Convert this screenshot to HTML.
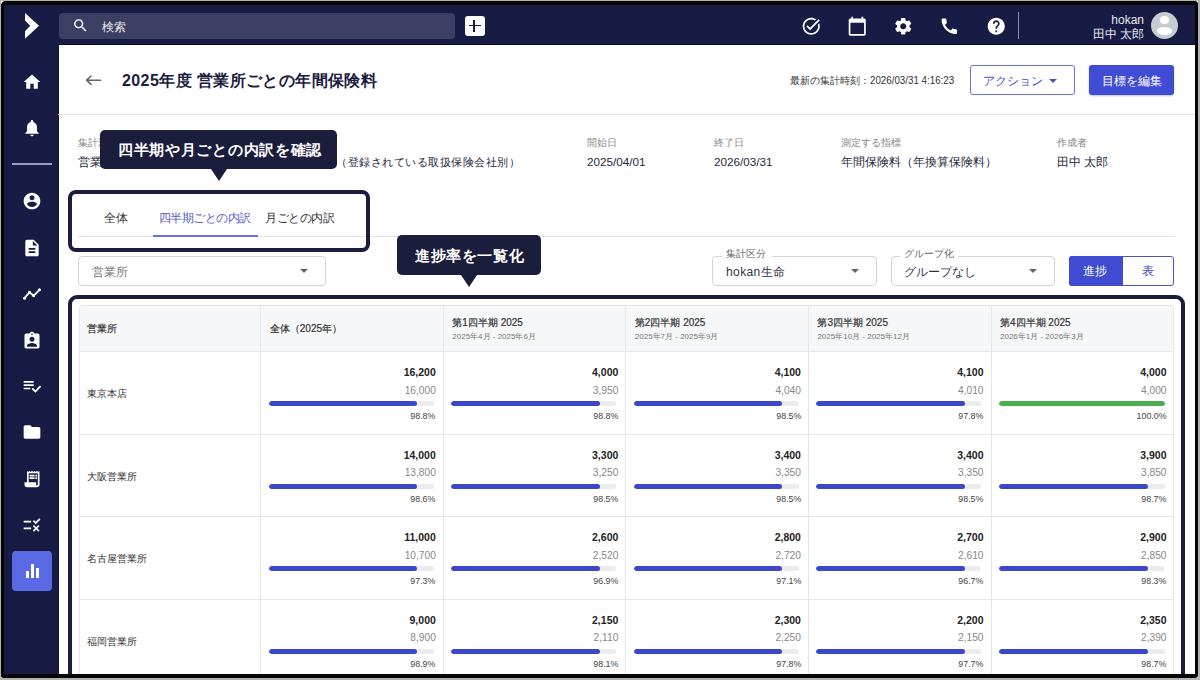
<!DOCTYPE html>
<html><head><meta charset="utf-8">
<style>
*{box-sizing:border-box;margin:0;padding:0}
html,body{width:1200px;height:680px;overflow:hidden;background:#fff}
body{font-family:"Liberation Sans",sans-serif;position:relative;color:#1b1d3f}
.a{position:absolute}
svg{display:block}
.ico{position:absolute;fill:#fff}
.t{position:absolute;white-space:nowrap;line-height:1}
#frame{position:absolute;left:0;top:0;width:1200px;height:680px;border-style:solid;border-color:rgba(0,0,0,.3);border-width:1px 2px 2px 1px;pointer-events:none}
#frame2{position:absolute;left:1px;top:1px;width:1196.5px;height:677px;border-style:solid;border-color:#060606;border-width:4px 3px 4px 3.5px;border-radius:5px 4px 3px 3px;box-shadow:0 0 0 12px #fff;pointer-events:none}
.nav{background:#181b44}
.n{display:inline-block;transform:scaleX(.93);transform-origin:0 0}
.hd{font-size:10px;color:#333;-webkit-text-stroke:0.2px #333}
.sb{font-size:8px;color:#777}
.nm{font-size:10px;color:#333}
.bn{font-size:10.5px;font-weight:bold;color:#222}
.gn{font-size:10.2px;color:#888}
.pc{font-size:9.3px;color:#444;transform:scaleX(.95);transform-origin:100% 0}
.trk{height:5px;background:#ececec;border-radius:3px;overflow:hidden}
.fil{height:5px;border-radius:3px}
</style></head><body>
<!-- top bar & sidebar -->
<div class="a nav" style="left:0;top:0;width:1200px;height:45px"></div>
<div class="a nav" style="left:0;top:0;width:58px;height:680px"></div>
<div class="a" style="left:58px;top:44px;width:1142px;height:1px;background:#080a2c"></div>
<div class="a" style="left:58px;top:45px;width:1px;height:635px;background:#0c0f33"></div>

<!-- logo chevron -->
<svg class="ico" style="left:25px;top:13px" width="15" height="26" viewBox="0 0 15 26"><path d="M0 0 L14 12.8 L0 25.8 L0 18.3 L5.2 12.8 L0 7.5 Z"/></svg>

<!-- search -->
<div class="a" style="left:59px;top:13px;width:396px;height:26px;background:#3c3f62;border-radius:4px"></div>
<svg class="ico" style="left:71.7px;top:17.3px" width="17" height="17" viewBox="0 0 24 24"><path d="M15.5 14h-.79l-.28-.27C15.410 12.59 16 11.11 16 9.5 16 5.91 13.09 3 9.5 3S3 5.91 3 9.5 5.91 16 9.5 16c1.61 0 3.090-.59 4.23-1.57l.27.28v.79l5 4.99L20.49 19l-4.99-5zm-6 0C7.01 14 5 11.99 5 9.5S7.01 5 9.5 5 14 7.01 14 9.5 11.99 14 9.5 14z"/></svg>
<div class="t" style="left:102px;top:21px;font-size:12px;color:#e4e4ec">検索</div>
<!-- plus -->
<div class="a" style="left:464.7px;top:15.5px;width:20px;height:20px;background:#fff;border-radius:3px"></div>
<div class="a nav" style="left:468.5px;top:24.6px;width:12px;height:1.8px"></div>
<div class="a nav" style="left:473.4px;top:19.7px;width:1.8px;height:12px"></div>

<!-- right icons -->
<svg class="ico" style="left:801px;top:15.7px" width="20.5" height="20.5" viewBox="0 0 24 24"><path d="M22 5.18L10.59 16.6l-4.24-4.24 1.41-1.41 2.83 2.83 10-10L22 5.18zm-2.21 5.04c.13.57.21 1.170.21 1.78 0 4.42-3.58 8-8 8s-8-3.58-8-8 3.58-8 8-8c1.58 0 3.04.46 4.28 1.25l1.44-1.44C16.1 2.67 14.13 2 12 2 6.48 2 2 6.48 2 12s4.48 10 10 10 10-4.48 10-10c0-1.19-.22-2.33-.6-3.39l-1.61 1.61z"/></svg>
<svg class="ico" style="left:847px;top:15.8px" width="20.5" height="20.5" viewBox="0 0 24 24"><path d="M20 3h-1V1h-2v2H7V1H5v2H4c-1.1 0-2 .9-2 2v16c0 1.1.9 2 2 2h16c1.1 0 2-.9 2-2V5c0-1.1-.9-2-2-2zm0 18H4V8h16v13z"/></svg>
<svg class="ico" style="left:892.7px;top:15.6px" width="20.5" height="20.5" viewBox="0 0 24 24"><path d="M19.14 12.94c.04-.3.06-.61.06-.94 0-.32-.02-.64-.07-.94l2.03-1.58c.18-.14.23-.41.12-.61l-1.92-3.32c-.12-.22-.37-.29-.59-.22l-2.39.96c-.5-.38-1.03-.7-1.62-.94l-.36-2.54c-.04-.24-.24-.41-.48-.41h-3.84c-.24 0-.43.17-.47.41l-.36 2.54c-.59.24-1.13.57-1.62.94l-2.39-.96c-.22-.08-.47 0-.59.22L2.740 8.87c-.12.21-.08.47.12.61l2.03 1.58c-.05.3-.09.63-.09.94s.02.64.07.94l-2.03 1.58c-.18.14-.23.41-.12.61l1.92 3.32c.12.22.37.29.59.22l2.39-.96c.5.38 1.03.7 1.62.94l.36 2.54c.05.24.24.41.48.41h3.84c.24 0 .44-.17.47-.41l.36-2.54c.59-.24 1.13-.56 1.62-.94l2.39.96c.22.08.47 0 .59-.22l1.92-3.32c.12-.22.07-.47-.12-.61l-2.01-1.58zM12 15.6c-1.98 0-3.6-1.62-3.6-3.6s1.62-3.6 3.6-3.6 3.6 1.62 3.6 3.6-1.62 3.6-3.6 3.6z"/></svg>
<svg class="ico" style="left:939px;top:16px" width="20.5" height="20.5" viewBox="0 0 24 24"><path d="M20.01 15.38c-1.23 0-2.42-.2-3.53-.56-.35-.12-.74-.03-1.01.24l-1.57 1.97c-2.83-1.35-5.48-3.9-6.89-6.83l1.95-1.66c.27-.28.35-.67.24-1.02-.37-1.11-.56-2.3-.56-3.53 0-.54-.45-.99-.99-.99H4.19C3.65 3 3 3.24 3 3.990 3 13.28 10.73 21 20.01 21c.71 0 .99-.63.99-1.18v-3.45c0-.54-.45-.99-.99-.99z"/></svg>
<svg class="ico" style="left:986px;top:15.7px" width="20.5" height="20.5" viewBox="0 0 24 24"><path d="M12 2C6.48 2 2 6.48 2 12s4.48 10 10 10 10-4.48 10-10S17.52 2 12 2zm1 17h-2v-2h2v2zm2.07-7.75l-.9.92C13.45 12.9 13 13.5 13 15h-2v-.5c0-1.1.45-2.1 1.17-2.83l1.24-1.26c.37-.36.59-.86.59-1.41 0-1.1-.9-2-2-2s-2 .9-2 2H8c0-2.21 1.79-4 4-4s4 1.79 4 4c0 .88-.36 1.68-.93 2.25z"/></svg>
<div class="a" style="left:1018px;top:12px;width:1px;height:27px;background:#8a8ca8"></div>
<div class="t" style="right:56px;top:14px;font-size:12px;color:#e8e9f2">hokan</div>
<div class="t" style="right:56px;top:27.5px;font-size:12px;color:#e8e9f2">田中 太郎</div>
<div class="a" style="left:1151px;top:12px;width:27px;height:27px;border-radius:50%;background:#c9cbd3;overflow:hidden">
  <div class="a" style="left:9.2px;top:3.6px;width:8.6px;height:8.6px;border-radius:50%;background:#fff"></div>
  <div class="a" style="left:5.6px;top:15.3px;width:15.8px;height:7.8px;border-radius:50%;background:#fff"></div>
</div>

<!-- sidebar icons -->
<svg class="ico" style="left:22px;top:72px" width="20" height="20" viewBox="0 0 24 24"><path d="M10 20v-6h4v6h5v-8h3L12 3 2 12h3v8z"/></svg>
<svg class="ico" style="left:22px;top:118px" width="20" height="20" viewBox="0 0 24 24"><path d="M12 22c1.1 0 2-.9 2-2h-4c0 1.1.89 2 2 2zm6-6v-5c0-3.07-1.64-5.64-4.5-6.32V4c0-.83-.67-1.5-1.5-1.5s-1.5.67-1.5 1.5v.68C7.63 5.36 6 7.92 6 11v5l-2 2v1h16v-1l-2-2z"/></svg>
<div class="a" style="left:12px;top:163px;width:40px;height:2px;background:#9a9cc0"></div>
<svg class="ico" style="left:22px;top:191px" width="20" height="20" viewBox="0 0 24 24"><path d="M12 2C6.48 2 2 6.48 2 12s4.48 10 10 10 10-4.48 10-10S17.52 2 12 2zm0 3c1.66 0 3 1.34 3 3s-1.34 3-3 3-3-1.34-3-3 1.34-3 3-3zm0 14.2c-2.5 0-4.71-1.28-6-3.22.03-1.99 4-3.08 6-3.08 1.99 0 5.970 1.09 6 3.08-1.29 1.94-3.5 3.22-6 3.22z"/></svg>
<svg class="ico" style="left:22px;top:238px" width="20" height="20" viewBox="0 0 24 24"><path d="M14 2H6c-1.1 0-1.99.9-1.99 2L4 20c0 1.1.89 2 1.99 2H18c1.1 0 2-.9 2-2V8l-6-6zm2 16H8v-2h8v2zm0-4H8v-2h8v2zm-3-5V3.5L18.5 9H13z"/></svg>
<svg class="a" style="left:22px;top:284px" width="20" height="20" viewBox="0 0 24 24"><polyline points="3,17 9,10 14,14 21,7" fill="none" stroke="#fff" stroke-width="2.2"/><circle cx="3" cy="17" r="1.8" fill="#fff"/><circle cx="9" cy="10" r="1.8" fill="#fff"/><circle cx="14" cy="14" r="1.8" fill="#fff"/><circle cx="21" cy="7" r="1.8" fill="#fff"/></svg>
<svg class="ico" style="left:22px;top:331px" width="20" height="20" viewBox="0 0 24 24"><path d="M19 3h-4.18C14.4 1.84 13.3 1 12 1c-1.3 0-2.4.84-2.82 2H5c-1.1 0-2 .9-2 2v14c0 1.1.9 2 2 2h14c1.1 0 2-.9 2-2V5c0-1.1-.9-2-2-2zm-7 0c.55 0 1 .45 1 1s-.45 1-1 1-1-.45-1-1 .45-1 1-1zm0 4c1.66 0 3 1.34 3 3s-1.34 3-3 3-3-1.34-3-3 1.34-3 3-3zm6 12H6v-1.4c0-2 4-3.1 6-3.1s6 1.1 6 3.1V19z"/></svg>
<svg class="ico" style="left:22px;top:376px" width="20" height="20" viewBox="0 0 24 24"><path d="M14 10H2v2h12v-2zm0-4H2v2h12V6zM2 16h8v-2H2v2zm19.5-4.5L23 13l-6.99 7-4.51-4.5L13 14l3.01 3 5.49-5.5z"/></svg>
<svg class="ico" style="left:22px;top:422px" width="20" height="20" viewBox="0 0 24 24"><path d="M10 4H4c-1.1 0-1.99.9-1.99 2L2 18c0 1.1.9 2 2 2h16c1.1 0 2-.9 2-2V8c0-1.1-.9-2-2-2h-8l-2-2z"/></svg>
<svg class="ico" style="left:22px;top:469px" width="20" height="20" viewBox="0 0 24 24"><path d="M19.5 3.5L18 2l-1.5 1.5L15 2l-1.5 1.5L12 2l-1.5 1.5L9 2 7.5 3.5 6 2v14H3v3c0 1.66 1.34 3 3 3h12c1.66 0 3-1.34 3-3V2l-1.5 1.5zM19 19c0 .55-.45 1-1 1s-1-.45-1-1v-3H8V5h11v14z"/><path d="M9 7h6v2H9zM16 7h2v2h-2zM9 10h6v2H9zM16 10h2v2h-2z"/></svg>
<svg class="ico" style="left:22px;top:515px" width="20" height="20" viewBox="0 0 24 24"><path d="M16.54 11L13 7.46l1.41-1.41 2.12 2.12 4.24-4.24 1.41 1.41L16.54 11zM11 7H2v2h9V7zm10 6.41L19.590 12 17 14.59 14.41 12 13 13.41 15.59 16 13 18.59 14.41 20 17 17.41 19.59 20 21 18.59 18.41 16 21 13.41zM11 15H2v2h9v-2z"/></svg>
<div class="a" style="left:12px;top:551px;width:40px;height:40px;border-radius:4px;background:#5a6ae4"></div>
<div class="a" style="left:25.6px;top:571px;width:3.5px;height:7px;background:#fff"></div><div class="a" style="left:30.7px;top:564.4px;width:3.5px;height:13.6px;background:#fff"></div><div class="a" style="left:35.6px;top:568.2px;width:3.6px;height:9.8px;background:#fff"></div>

<!-- header -->
<svg class="a" style="left:84px;top:72px" width="18" height="16" viewBox="0 0 18 16"><path d="M16.6 8.2H2.6M7 4L2.6 8.2 7 12.4" fill="none" stroke="#666" stroke-width="1.6" stroke-linecap="round" stroke-linejoin="round"/></svg>
<div class="t" style="left:122px;top:72.5px;font-size:16px;letter-spacing:0.4px;font-weight:bold;color:#1b1d3f">2025年度 営業所ごとの年間保険料</div>
<div class="t" style="left:789.5px;top:75px;font-size:10px;color:#333">最新の集計時刻：<span class="n" style="font-size:10.5px">2026/03/31 4:16:23</span></div>
<div class="a" style="left:970px;top:65px;width:105px;height:30px;border:1px solid #6d74d0;border-radius:3px"></div>
<div class="t" style="left:983px;top:75px;font-size:12px;color:#4d55bd">アクション</div>
<div class="a" style="left:1049px;top:78.5px;width:0;height:0;border-left:4px solid transparent;border-right:4px solid transparent;border-top:4px solid #4d55bd"></div>
<div class="a" style="left:1089px;top:65px;width:85px;height:30px;background:#404cd4;border-radius:3px;box-shadow:0 1px 2px rgba(0,0,0,.25)"></div>
<div class="t" style="left:1102px;top:74.5px;font-size:12px;color:#fff">目標を編集</div>
<div class="a" style="left:58px;top:114px;width:1137px;height:1px;background:#e3e3e3"></div>

<!-- info row -->
<div class="t" style="left:78px;top:138px;font-size:10px;color:#858585">集計対象</div>
<div class="t" style="left:78px;top:156px;font-size:11.7px;color:#262840">営業所ごとの年間保険料</div>
<div class="t" style="left:336px;top:156.5px;font-size:11px;letter-spacing:0.5px;color:#262840">（登録されている取扱保険会社別）</div>
<div class="t" style="left:587px;top:138px;font-size:10px;color:#858585">開始日</div>
<div class="t" style="left:587px;top:156px;font-size:11.7px;color:#262840">2025/04/01</div>
<div class="t" style="left:714px;top:138px;font-size:10px;color:#858585">終了日</div>
<div class="t" style="left:714px;top:156px;font-size:11.7px;color:#262840">2026/03/31</div>
<div class="t" style="left:841px;top:138px;font-size:10px;color:#858585">測定する指標</div>
<div class="t" style="left:841px;top:156px;font-size:11.7px;color:#262840">年間保険料（年換算保険料）</div>
<div class="t" style="left:1057px;top:138px;font-size:10px;color:#858585">作成者</div>
<div class="t" style="left:1057px;top:156px;font-size:11.7px;color:#262840">田中 太郎</div>

<!-- tabs -->
<div class="t" style="left:104px;top:211.5px;font-size:12px;color:#333">全体</div>
<div class="t" style="left:158.5px;top:211.5px;font-size:12px;letter-spacing:-0.45px;color:#5860c6">四半期ごとの内訳</div>
<div class="t" style="left:265px;top:211.5px;font-size:12px;letter-spacing:-0.45px;color:#333">月ごとの内訳</div>
<div class="a" style="left:78px;top:236px;width:1097px;height:1px;background:#e3e3e3"></div>
<div class="a" style="left:153px;top:234.5px;width:105px;height:2px;background:#6a72d0"></div>

<!-- filters -->
<div class="a" style="left:78px;top:256px;width:248px;height:30px;border:1px solid #d4d4d4;border-radius:4px"></div>
<div class="t" style="left:92px;top:265.7px;font-size:12px;color:#777">営業所</div>
<div class="a" style="left:300px;top:269px;border-left:4px solid transparent;border-right:4px solid transparent;border-top:4px solid #666"></div>

<div class="a" style="left:712px;top:256px;width:165px;height:30px;border:1px solid #d4d4d4;border-radius:4px"></div>
<div class="a" style="left:722px;top:250px;width:50px;height:10px;background:#fff"></div>
<div class="t" style="left:726px;top:249px;font-size:10px;color:#666">集計区分</div>
<div class="t" style="left:726px;top:265.5px;font-size:12px;letter-spacing:0.4px;color:#33344a">hokan生命</div>
<div class="a" style="left:851px;top:269px;border-left:4px solid transparent;border-right:4px solid transparent;border-top:4px solid #666"></div>

<div class="a" style="left:891px;top:256px;width:164px;height:30px;border:1px solid #d4d4d4;border-radius:4px"></div>
<div class="a" style="left:900px;top:250px;width:58px;height:10px;background:#fff"></div>
<div class="t" style="left:904px;top:249px;font-size:10px;color:#666">グループ化</div>
<div class="t" style="left:904px;top:265.5px;font-size:12px;color:#33344a">グループなし</div>
<div class="a" style="left:1029px;top:269px;border-left:4px solid transparent;border-right:4px solid transparent;border-top:4px solid #666"></div>

<div class="a" style="left:1069px;top:256px;width:105px;height:30px;border:1px solid #4c54c4;border-radius:3px"></div>
<div class="a" style="left:1069px;top:256px;width:54px;height:30px;background:#3f4bd0;border-radius:3px 0 0 3px"></div>
<div class="t" style="left:1083px;top:265px;font-size:12px;color:#fff">進捗</div>
<div class="t" style="left:1142px;top:265px;font-size:12px;color:#3f47bf">表</div>

<!--TABLE-->
<div class="a" style="left:79px;top:305px;width:1095px;height:400px;border:1px solid #e5e6e7;border-radius:3px 3px 0 0;background:#fff"></div>
<div class="a" style="left:80px;top:306px;width:1093px;height:45px;background:#f6f7f9;border-radius:2px 2px 0 0"></div>
<div class="a" style="left:79px;top:351px;width:1095px;height:1px;background:#e5e6e7"></div>
<div class="a" style="left:260.3px;top:305px;width:1px;height:400px;background:#e5e6e7"></div>
<div class="a" style="left:442.8px;top:305px;width:1px;height:400px;background:#e5e6e7"></div>
<div class="a" style="left:625.3px;top:305px;width:1px;height:400px;background:#e5e6e7"></div>
<div class="a" style="left:807.9px;top:305px;width:1px;height:400px;background:#e5e6e7"></div>
<div class="a" style="left:990.5px;top:305px;width:1px;height:400px;background:#e5e6e7"></div>
<div class="a" style="left:79px;top:433.5px;width:1095px;height:1px;background:#e5e6e7"></div>
<div class="a" style="left:79px;top:516.0px;width:1095px;height:1px;background:#e5e6e7"></div>
<div class="a" style="left:79px;top:598.5px;width:1095px;height:1px;background:#e5e6e7"></div>
<div class="t hd" style="left:87px;top:324px">営業所</div>
<div class="t hd" style="left:269.8px;top:324px">全体（2025年）</div>
<div class="t hd" style="left:452.3px;top:318px">第1四半期 2025</div>
<div class="t sb" style="left:452.3px;top:333px">2025年4月 - 2025年6月</div>
<div class="t hd" style="left:634.8px;top:318px">第2四半期 2025</div>
<div class="t sb" style="left:634.8px;top:333px">2025年7月 - 2025年9月</div>
<div class="t hd" style="left:817.4px;top:318px">第3四半期 2025</div>
<div class="t sb" style="left:817.4px;top:333px">2025年10月 - 2025年12月</div>
<div class="t hd" style="left:1000.0px;top:318px">第4四半期 2025</div>
<div class="t sb" style="left:1000.0px;top:333px">2026年1月 - 2026年3月</div>
<div class="t nm" style="left:87px;top:389.0px">東京本店</div>
<div class="t bn" style="right:764.2px;top:367.0px">16,200</div>
<div class="t gn" style="right:764.2px;top:385.5px">16,000</div>
<div class="a trk" style="left:268.8px;top:401.0px;width:165.0px"><div class="fil" style="width:90%;background:#3c48cc"></div></div>
<div class="t pc" style="right:764.2px;top:412.0px">98.8%</div>
<div class="t bn" style="right:581.7px;top:367.0px">4,000</div>
<div class="t gn" style="right:581.7px;top:385.5px">3,950</div>
<div class="a trk" style="left:451.3px;top:401.0px;width:165.0px"><div class="fil" style="width:90%;background:#3c48cc"></div></div>
<div class="t pc" style="right:581.7px;top:412.0px">98.8%</div>
<div class="t bn" style="right:399.1px;top:367.0px">4,100</div>
<div class="t gn" style="right:399.1px;top:385.5px">4,040</div>
<div class="a trk" style="left:633.8px;top:401.0px;width:165.1px"><div class="fil" style="width:90%;background:#3c48cc"></div></div>
<div class="t pc" style="right:399.1px;top:412.0px">98.5%</div>
<div class="t bn" style="right:216.5px;top:367.0px">4,100</div>
<div class="t gn" style="right:216.5px;top:385.5px">4,010</div>
<div class="a trk" style="left:816.4px;top:401.0px;width:165.1px"><div class="fil" style="width:90%;background:#3c48cc"></div></div>
<div class="t pc" style="right:216.5px;top:412.0px">97.8%</div>
<div class="t bn" style="right:33.5px;top:367.0px">4,000</div>
<div class="t gn" style="right:33.5px;top:385.5px">4,000</div>
<div class="a trk" style="left:999.0px;top:401.0px;width:165.5px"><div class="fil" style="width:100%;background:#4caf50"></div></div>
<div class="t pc" style="right:33.5px;top:412.0px">100.0%</div>
<div class="t nm" style="left:87px;top:471.5px">大阪営業所</div>
<div class="t bn" style="right:764.2px;top:449.5px">14,000</div>
<div class="t gn" style="right:764.2px;top:468.0px">13,800</div>
<div class="a trk" style="left:268.8px;top:483.5px;width:165.0px"><div class="fil" style="width:90%;background:#3c48cc"></div></div>
<div class="t pc" style="right:764.2px;top:494.5px">98.6%</div>
<div class="t bn" style="right:581.7px;top:449.5px">3,300</div>
<div class="t gn" style="right:581.7px;top:468.0px">3,250</div>
<div class="a trk" style="left:451.3px;top:483.5px;width:165.0px"><div class="fil" style="width:90%;background:#3c48cc"></div></div>
<div class="t pc" style="right:581.7px;top:494.5px">98.5%</div>
<div class="t bn" style="right:399.1px;top:449.5px">3,400</div>
<div class="t gn" style="right:399.1px;top:468.0px">3,350</div>
<div class="a trk" style="left:633.8px;top:483.5px;width:165.1px"><div class="fil" style="width:90%;background:#3c48cc"></div></div>
<div class="t pc" style="right:399.1px;top:494.5px">98.5%</div>
<div class="t bn" style="right:216.5px;top:449.5px">3,400</div>
<div class="t gn" style="right:216.5px;top:468.0px">3,350</div>
<div class="a trk" style="left:816.4px;top:483.5px;width:165.1px"><div class="fil" style="width:90%;background:#3c48cc"></div></div>
<div class="t pc" style="right:216.5px;top:494.5px">98.5%</div>
<div class="t bn" style="right:33.5px;top:449.5px">3,900</div>
<div class="t gn" style="right:33.5px;top:468.0px">3,850</div>
<div class="a trk" style="left:999.0px;top:483.5px;width:165.5px"><div class="fil" style="width:90%;background:#3c48cc"></div></div>
<div class="t pc" style="right:33.5px;top:494.5px">98.7%</div>
<div class="t nm" style="left:87px;top:554.0px">名古屋営業所</div>
<div class="t bn" style="right:764.2px;top:532.0px">11,000</div>
<div class="t gn" style="right:764.2px;top:550.5px">10,700</div>
<div class="a trk" style="left:268.8px;top:566.0px;width:165.0px"><div class="fil" style="width:90%;background:#3c48cc"></div></div>
<div class="t pc" style="right:764.2px;top:577.0px">97.3%</div>
<div class="t bn" style="right:581.7px;top:532.0px">2,600</div>
<div class="t gn" style="right:581.7px;top:550.5px">2,520</div>
<div class="a trk" style="left:451.3px;top:566.0px;width:165.0px"><div class="fil" style="width:90%;background:#3c48cc"></div></div>
<div class="t pc" style="right:581.7px;top:577.0px">96.9%</div>
<div class="t bn" style="right:399.1px;top:532.0px">2,800</div>
<div class="t gn" style="right:399.1px;top:550.5px">2,720</div>
<div class="a trk" style="left:633.8px;top:566.0px;width:165.1px"><div class="fil" style="width:90%;background:#3c48cc"></div></div>
<div class="t pc" style="right:399.1px;top:577.0px">97.1%</div>
<div class="t bn" style="right:216.5px;top:532.0px">2,700</div>
<div class="t gn" style="right:216.5px;top:550.5px">2,610</div>
<div class="a trk" style="left:816.4px;top:566.0px;width:165.1px"><div class="fil" style="width:90%;background:#3c48cc"></div></div>
<div class="t pc" style="right:216.5px;top:577.0px">96.7%</div>
<div class="t bn" style="right:33.5px;top:532.0px">2,900</div>
<div class="t gn" style="right:33.5px;top:550.5px">2,850</div>
<div class="a trk" style="left:999.0px;top:566.0px;width:165.5px"><div class="fil" style="width:90%;background:#3c48cc"></div></div>
<div class="t pc" style="right:33.5px;top:577.0px">98.3%</div>
<div class="t nm" style="left:87px;top:636.5px">福岡営業所</div>
<div class="t bn" style="right:764.2px;top:614.5px">9,000</div>
<div class="t gn" style="right:764.2px;top:633.0px">8,900</div>
<div class="a trk" style="left:268.8px;top:648.5px;width:165.0px"><div class="fil" style="width:90%;background:#3c48cc"></div></div>
<div class="t pc" style="right:764.2px;top:659.5px">98.9%</div>
<div class="t bn" style="right:581.7px;top:614.5px">2,150</div>
<div class="t gn" style="right:581.7px;top:633.0px">2,110</div>
<div class="a trk" style="left:451.3px;top:648.5px;width:165.0px"><div class="fil" style="width:90%;background:#3c48cc"></div></div>
<div class="t pc" style="right:581.7px;top:659.5px">98.1%</div>
<div class="t bn" style="right:399.1px;top:614.5px">2,300</div>
<div class="t gn" style="right:399.1px;top:633.0px">2,250</div>
<div class="a trk" style="left:633.8px;top:648.5px;width:165.1px"><div class="fil" style="width:90%;background:#3c48cc"></div></div>
<div class="t pc" style="right:399.1px;top:659.5px">97.8%</div>
<div class="t bn" style="right:216.5px;top:614.5px">2,200</div>
<div class="t gn" style="right:216.5px;top:633.0px">2,150</div>
<div class="a trk" style="left:816.4px;top:648.5px;width:165.1px"><div class="fil" style="width:90%;background:#3c48cc"></div></div>
<div class="t pc" style="right:216.5px;top:659.5px">97.7%</div>
<div class="t bn" style="right:33.5px;top:614.5px">2,350</div>
<div class="t gn" style="right:33.5px;top:633.0px">2,390</div>
<div class="a trk" style="left:999.0px;top:648.5px;width:165.5px"><div class="fil" style="width:90%;background:#3c48cc"></div></div>
<div class="t pc" style="right:33.5px;top:659.5px">98.7%</div>
<!--/TABLE-->

<!-- tooltips -->
<div class="a" style="left:68.2px;top:190px;width:302.3px;height:62px;border:4.4px solid #1a1d3c;border-radius:8px"></div>
<div class="a" style="left:100px;top:130px;width:237px;height:39px;background:#1a1d3c;border-radius:5px"></div>
<div class="a" style="left:210.5px;top:169px;border-left:8px solid transparent;border-right:8px solid transparent;border-top:12.5px solid #1a1d3c"></div>
<div class="t" style="left:118px;top:142px;font-size:15px;font-weight:bold;color:#fff;letter-spacing:0.7px">四半期や月ごとの内訳を確認</div>

<div class="a" style="left:68.3px;top:295.4px;width:1116.7px;height:400px;border:4.4px solid #1a1d3c;border-radius:9px"></div>
<div class="a" style="left:397px;top:235px;width:144px;height:40px;background:#1a1d3c;border-radius:5px"></div>
<div class="a" style="left:461px;top:275px;border-left:8px solid transparent;border-right:8px solid transparent;border-top:12px solid #1a1d3c"></div>
<div class="t" style="left:415px;top:248px;font-size:15px;font-weight:bold;color:#fff;letter-spacing:0.6px">進捗率を一覧化</div>

<div id="frame2"></div>
<div id="frame"></div>
</body></html>
